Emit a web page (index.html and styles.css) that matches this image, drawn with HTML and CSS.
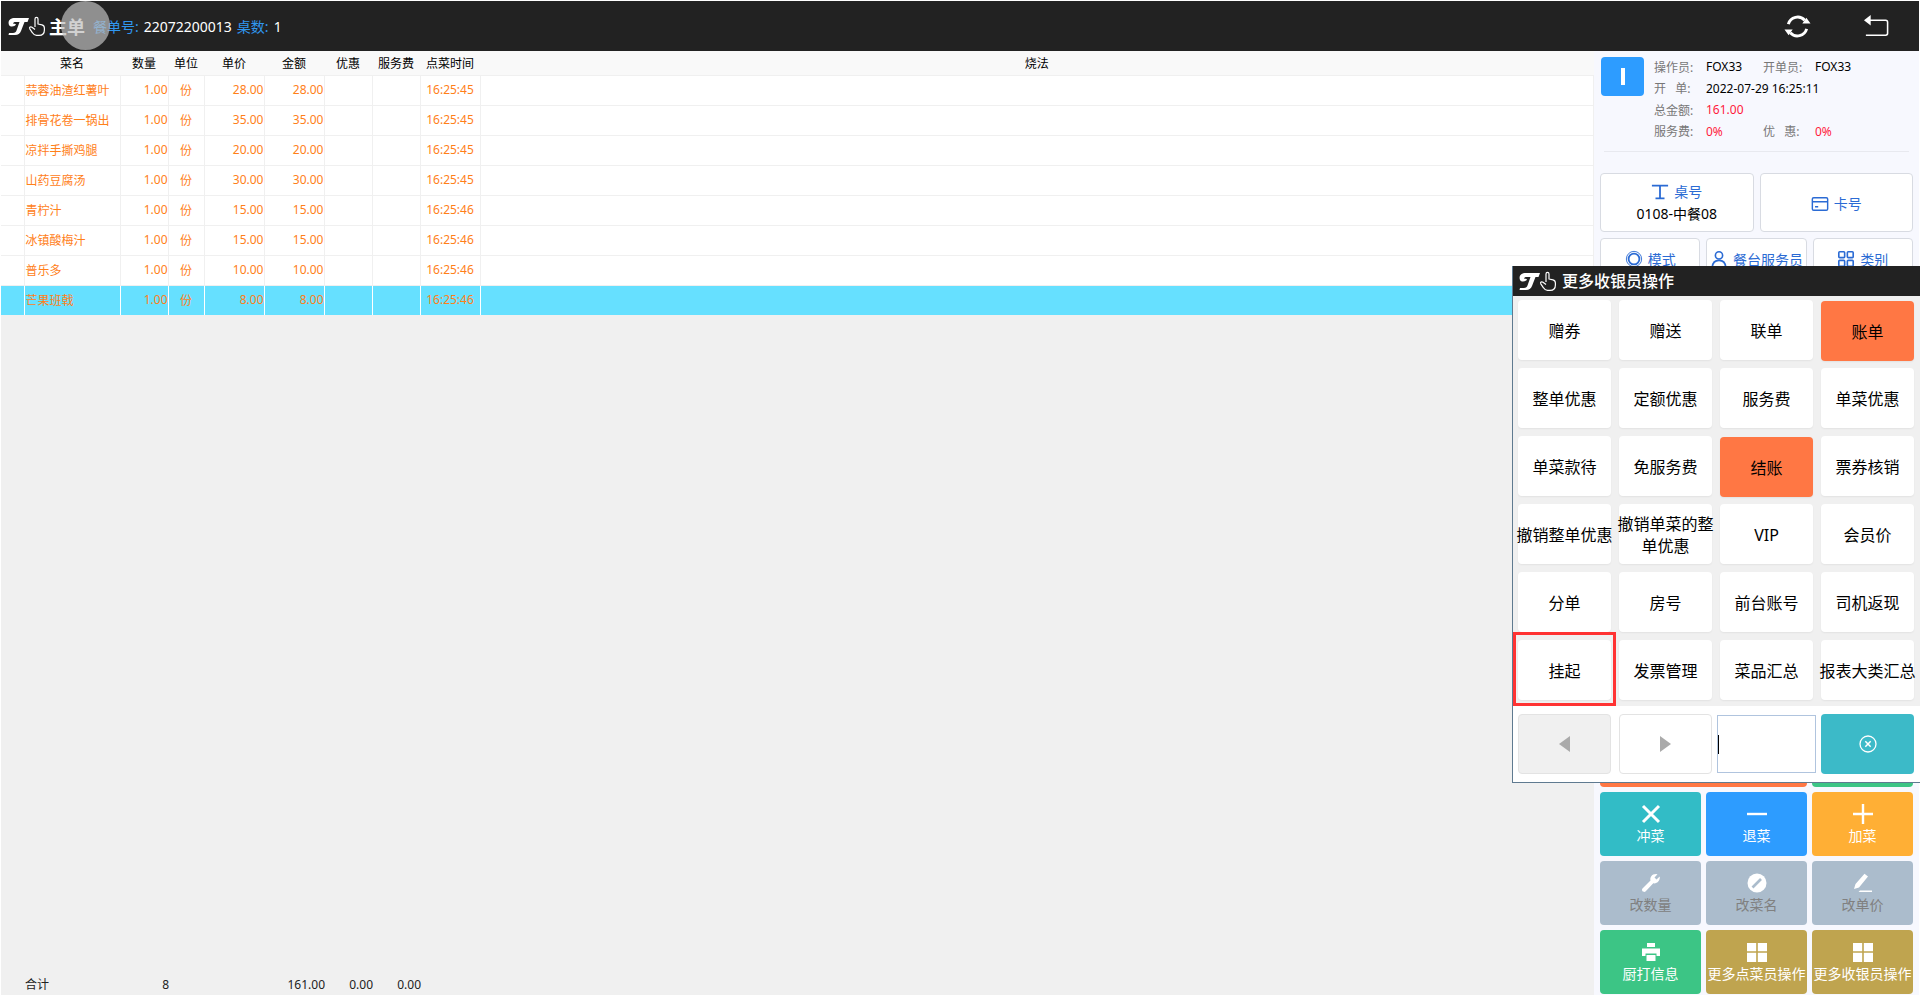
FILE: index.html
```html
<!DOCTYPE html>
<html lang="zh-CN">
<head>
    <meta charset="UTF-8">
    <title>主单</title>
    <link rel="stylesheet" href="styles.css">
</head>
<body>
    <svg class="defs" width="0" height="0">
        <symbol id="logo" viewBox="0 0 37 20">
            <path fill="#fff" d="M1 9C-.5 5 2 2 7 2H21L19.5 6H16.5L13 15C12 17.5 10 19 7 19H.5L1 17H5C7 17 8 16 8.5 14.5L11.5 6H7.5C5.5 6 5 7 5.5 8C6.5 7.5 7.5 7.6 8 8.5C7 10.5 2.5 11.5 1 9Z"/>
            <path fill="none" stroke="#fff" stroke-width="1.2" stroke-linejoin="round" d="M27 11V3C27 .8 30 .8 30 3V8L34 8.8C36 9.3 36.4 10 36.4 12V14C36.4 17.5 34.5 19.4 31 19.4H28.5C26.5 19.4 25.5 18.4 24.5 16.8L21.8 12.8C21 11.4 22.6 10.2 24 11.2L27 13.5"/>
        </symbol>
    </svg>

    <div class="app">
        <header class="topbar">
            <svg class="logo"><use href="#logo"/></svg>
            <span class="title">主单</span>
            <span class="meta-label">餐单号:</span>
            <span class="meta-value">22072200013</span>
            <span class="meta-label table-count">桌数:</span>
            <span class="meta-value">1</span>
            <span class="touch-dot"></span>
            <div class="top-actions">
                <svg class="top-icon" viewBox="0 0 28 28">
                    <path fill="none" stroke="#fff" stroke-width="3" d="M4.5 11.5A10 10 0 0 1 21.5 7.5M23.5 16.5A10 10 0 0 1 6.5 20.5"/>
                    <path fill="#fff" d="M19 11H27.5L23.2 5ZM.5 17H9L4.8 23Z"/>
                </svg>
                <svg class="top-icon" viewBox="0 0 28 28">
                    <path fill="none" stroke="#fff" stroke-width="1.6" d="M7 7.5H23.5C25 7.5 25.5 8.3 25.5 9.5V21C25.5 22.3 25 23 23.5 23H3"/>
                    <path fill="#fff" d="M1 7.5L8 2V13Z"/>
                </svg>
            </div>
        </header>

        <div class="content">
            <main class="orders">
                <table class="order-table">
                    <colgroup>
                        <col class="c-mark"><col class="c-name"><col class="c-qty"><col class="c-unit"><col class="c-price"><col class="c-amount"><col class="c-disc"><col class="c-fee"><col class="c-time"><col>
                    </colgroup>
                    <thead>
                        <tr><th></th><th>菜名</th><th>数量</th><th>单位</th><th>单价</th><th>金额</th><th>优惠</th><th>服务费</th><th>点菜时间</th><th>烧法</th></tr>
                    </thead>
                    <tbody>
                        <tr><td></td><td>蒜蓉油渣红薯叶</td><td class="num">1.00</td><td class="mid">份</td><td class="num">28.00</td><td class="num">28.00</td><td></td><td></td><td class="mid">16:25:45</td><td></td></tr>
                        <tr><td></td><td>排骨花卷一锅出</td><td class="num">1.00</td><td class="mid">份</td><td class="num">35.00</td><td class="num">35.00</td><td></td><td></td><td class="mid">16:25:45</td><td></td></tr>
                        <tr><td></td><td>凉拌手撕鸡腿</td><td class="num">1.00</td><td class="mid">份</td><td class="num">20.00</td><td class="num">20.00</td><td></td><td></td><td class="mid">16:25:45</td><td></td></tr>
                        <tr><td></td><td>山药豆腐汤</td><td class="num">1.00</td><td class="mid">份</td><td class="num">30.00</td><td class="num">30.00</td><td></td><td></td><td class="mid">16:25:45</td><td></td></tr>
                        <tr><td></td><td>青柠汁</td><td class="num">1.00</td><td class="mid">份</td><td class="num">15.00</td><td class="num">15.00</td><td></td><td></td><td class="mid">16:25:46</td><td></td></tr>
                        <tr><td></td><td>冰镇酸梅汁</td><td class="num">1.00</td><td class="mid">份</td><td class="num">15.00</td><td class="num">15.00</td><td></td><td></td><td class="mid">16:25:46</td><td></td></tr>
                        <tr><td></td><td>普乐多</td><td class="num">1.00</td><td class="mid">份</td><td class="num">10.00</td><td class="num">10.00</td><td></td><td></td><td class="mid">16:25:46</td><td></td></tr>
                        <tr class="selected"><td></td><td>芒果班戟</td><td class="num">1.00</td><td class="mid">份</td><td class="num">8.00</td><td class="num">8.00</td><td></td><td></td><td class="mid">16:25:46</td><td></td></tr>
                    </tbody>
                </table>
                <div class="totals">
                    <span class="t-label">合计</span>
                    <span class="t-qty">8</span>
                    <span class="t-amount">161.00</span>
                    <span class="t-disc">0.00</span>
                    <span class="t-fee">0.00</span>
                </div>
            </main>

            <aside class="side">
                <section class="info">
                    <div class="avatar"><span></span></div>
                    <div class="info-lines">
                        <div class="line"><span class="lbl">操作员:</span><span class="val">FOX33</span><span class="lbl">开单员:</span><span class="val">FOX33</span></div>
                        <div class="line"><span class="lbl">开&nbsp;&nbsp;&nbsp;单:</span><span class="val">2022-07-29 16:25:11</span></div>
                        <div class="line"><span class="lbl">总金额:</span><span class="val red">161.00</span></div>
                        <div class="line"><span class="lbl">服务费:</span><span class="val red">0%</span><span class="lbl">优&nbsp;&nbsp;&nbsp;惠:</span><span class="val red">0%</span></div>
                    </div>
                </section>

                <div class="card-row">
                    <div class="card">
                        <div class="card-title">
                            <svg class="card-icon" viewBox="0 0 20 20"><path fill="none" stroke="currentColor" stroke-width="2" d="M1 3H19M10 3V17M5 17H15"/></svg>桌号
                        </div>
                        <div class="card-value">0108-中餐08</div>
                    </div>
                    <div class="card">
                        <div class="card-title">
                            <svg class="card-icon" viewBox="0 0 20 20"><rect x="1.5" y="3" width="17" height="14" rx="1.5" fill="none" stroke="currentColor" stroke-width="1.6"/><path fill="none" stroke="currentColor" stroke-width="1.6" d="M2 7.5H18M4.5 13H8"/></svg>卡号
                        </div>
                    </div>
                </div>

                <div class="mode-row">
                    <div class="card small">
                        <svg class="card-icon" viewBox="0 0 20 20"><circle cx="10" cy="10" r="8.5" fill="none" stroke="currentColor" stroke-width="1"/><circle cx="10" cy="10" r="6" fill="none" stroke="currentColor" stroke-width="2"/></svg>模式
                    </div>
                    <div class="card small">
                        <svg class="card-icon" viewBox="0 0 20 20"><circle cx="10" cy="6" r="4" fill="none" stroke="currentColor" stroke-width="1.8"/><path fill="none" stroke="currentColor" stroke-width="1.8" d="M2.5 19C3 13.5 6 11.5 10 11.5S17 13.5 17.5 19"/></svg>餐台服务员
                    </div>
                    <div class="card small">
                        <svg class="card-icon" viewBox="0 0 20 20"><g fill="none" stroke="currentColor" stroke-width="1.8"><rect x="2" y="2" width="6.5" height="6.5" rx="1"/><rect x="11.5" y="2" width="6.5" height="6.5" rx="1"/><rect x="2" y="11.5" width="6.5" height="6.5" rx="1"/><rect x="11.5" y="11.5" width="6.5" height="6.5" rx="1"/></g></svg>类别
                    </div>
                </div>

                <div class="action-grid">
                    <div class="action orange wide"></div>
                    <div class="action green"></div>
                    <div class="action teal">
                        <svg class="action-icon" viewBox="0 0 20 20"><path stroke="#fff" stroke-width="3" d="M2 2L18 18M18 2L2 18"/></svg>冲菜
                    </div>
                    <div class="action blue">
                        <svg class="action-icon" viewBox="0 0 20 20"><path stroke="#fff" stroke-width="2.4" d="M0 10H20"/></svg>退菜
                    </div>
                    <div class="action amber">
                        <svg class="action-icon" viewBox="0 0 20 20"><path stroke="#fff" stroke-width="2.4" d="M0 10H20M10 0V20"/></svg>加菜
                    </div>
                    <div class="action muted">
                        <svg class="action-icon" viewBox="0 0 20 20"><path fill="#fff" d="M1.5 15.5L9.5 7.5C8.8 4.5 10.5 1 15 1L16.5 1.3L13.5 4.5L15.5 6.5L18.7 3.5C19.5 7.5 16 11 12.3 10.3L4.5 18.5C2.5 20 0 17.5 1.5 15.5Z"/></svg>改数量
                    </div>
                    <div class="action muted">
                        <svg class="action-icon" viewBox="0 0 20 20"><circle cx="10" cy="10" r="9.5" fill="#fff"/><path stroke="#abbccc" stroke-width="2.6" d="M5.5 14.5L14 6"/></svg>改菜名
                    </div>
                    <div class="action muted">
                        <svg class="action-icon" viewBox="0 0 20 20"><path fill="#fff" d="M1 16L2.5 11L11.5 .8L15 3.5L6 14.5ZM7 17.5H19V19H5.5Z"/></svg>改单价
                    </div>
                    <div class="action green">
                        <svg class="action-icon" viewBox="0 0 20 20"><path fill="#fff" d="M6 1H14V5H6ZM1 6.5H19V14H15.5V11.5H4.5V14H1ZM5.5 13H14.5V19H5.5Z"/></svg>厨打信息
                    </div>
                    <div class="action gold">
                        <svg class="action-icon" viewBox="0 0 20 20"><path fill="#fff" d="M0 1H9.2V9.2H0ZM10.8 1H20V9.2H10.8ZM0 10.8H9.2V20H0ZM10.8 10.8H20V20H10.8Z"/></svg>更多点菜员操作
                    </div>
                    <div class="action gold">
                        <svg class="action-icon" viewBox="0 0 20 20"><path fill="#fff" d="M0 1H9.2V9.2H0ZM10.8 1H20V9.2H10.8ZM0 10.8H9.2V20H0ZM10.8 10.8H20V20H10.8Z"/></svg>更多收银员操作
                    </div>
                </div>
            </aside>
        </div>
    </div>

    <!-- 更多收银员操作 popup -->
    <div class="popup">
        <div class="popup-head">
            <svg class="popup-logo"><use href="#logo"/></svg>
            <span>更多收银员操作</span>
        </div>
        <div class="popup-grid">
            <div class="pop-btn"><span>赠券</span></div>
            <div class="pop-btn"><span>赠送</span></div>
            <div class="pop-btn"><span>联单</span></div>
            <div class="pop-btn hot"><span>账单</span></div>
            <div class="pop-btn"><span>整单优惠</span></div>
            <div class="pop-btn"><span>定额优惠</span></div>
            <div class="pop-btn"><span>服务费</span></div>
            <div class="pop-btn"><span>单菜优惠</span></div>
            <div class="pop-btn"><span>单菜款待</span></div>
            <div class="pop-btn"><span>免服务费</span></div>
            <div class="pop-btn hot"><span>结账</span></div>
            <div class="pop-btn"><span>票券核销</span></div>
            <div class="pop-btn"><span>撤销整单优惠</span></div>
            <div class="pop-btn"><span>撤销单菜的整单优惠</span></div>
            <div class="pop-btn"><span>VIP</span></div>
            <div class="pop-btn"><span>会员价</span></div>
            <div class="pop-btn"><span>分单</span></div>
            <div class="pop-btn"><span>房号</span></div>
            <div class="pop-btn"><span>前台账号</span></div>
            <div class="pop-btn"><span>司机返现</span></div>
            <div class="pop-btn marked"><span>挂起</span></div>
            <div class="pop-btn"><span>发票管理</span></div>
            <div class="pop-btn"><span>菜品汇总</span></div>
            <div class="pop-btn"><span>报表大类汇总</span></div>
        </div>
        <div class="popup-foot">
            <div class="pager off"><i class="arrow-left"></i></div>
            <div class="pager"><i class="arrow-right"></i></div>
            <div class="search-box"><i class="caret"></i></div>
            <div class="clear-btn">
                <svg width="18" height="18" viewBox="0 0 18 18"><circle cx="9" cy="9" r="8" fill="none" stroke="#fff" stroke-width="1.3"/><path stroke="#fff" stroke-width="1.5" d="M6.3 6.3L11.7 11.7M11.7 6.3L6.3 11.7"/></svg>
            </div>
        </div>
    </div>
</body>
</html>
```

FILE: styles.css
```css
* {
    box-sizing: border-box;
}

html, body {
    height: 100%;
}

body {
    margin: 0;
    padding: 1px;
    background-color: #fff;
    color: #000;
    font-family: "Noto Sans", "Noto Sans CJK SC", sans-serif;
    font-size: 12px;
    overflow: hidden;
}

.defs {
    position: absolute;
}

.app {
    display: flex;
    flex-direction: column;
    height: 100%;
    background-color: #f0f0f0;
}

/* top bar */
.topbar {
    position: relative;
    display: flex;
    align-items: center;
    flex: none;
    height: 50px;
    padding-left: 7px;
    background-color: #222;
    color: #fff;
    font-size: 14px;
}

.logo {
    width: 37px;
    height: 20px;
    margin-right: 4px;
}

.title {
    width: 44px;
    font-size: 18px;
    font-weight: 700;
}

.meta-label {
    margin-right: 5px;
    color: #3097f0;
}

.meta-value {
    font-size: 14px;
}

.table-count {
    margin-left: 5px;
}

.touch-dot {
    position: absolute;
    left: 60px;
    top: 0;
    width: 49px;
    height: 49px;
    border-radius: 50%;
    background-color: rgba(190, 190, 190, 0.7);
}

.top-actions {
    display: flex;
    align-items: center;
    gap: 52px;
    margin-left: auto;
    margin-right: 29px;
}

.top-icon {
    width: 27px;
    height: 27px;
}

.content {
    display: flex;
    flex: 1;
    min-height: 0;
}

/* order table */
.orders {
    display: flex;
    flex-direction: column;
    flex: 1;
    min-width: 0;
}

.order-table {
    width: 100%;
    table-layout: fixed;
    border-collapse: collapse;
    background-color: #fff;
}

.c-mark { width: 23px; }
.c-name { width: 96px; }
.c-qty { width: 48px; }
.c-unit { width: 36px; }
.c-price { width: 60px; }
.c-amount { width: 60px; }
.c-disc { width: 48px; }
.c-fee { width: 48px; }
.c-time { width: 60px; }

.order-table th {
    height: 24px;
    padding: 3px 0 0;
    background-color: #f9f9f9;
    border-bottom: 1px solid #f0f0f0;
    font-weight: 400;
    text-align: center;
    line-height: 1;
}

.order-table td {
    height: 30px;
    padding: 0 1px 1px;
    border: 1px solid #f0f0f0;
    border-top: 0;
    color: #ff8019;
    white-space: nowrap;
    overflow: hidden;
}

.order-table td:first-child {
    border-left: 0;
}

.order-table .num {
    padding-right: 0;
    text-align: right;
}

.order-table .mid {
    text-align: center;
}

.order-table .selected td {
    background-color: #66e0ff;
    border-color: #fff;
    border-bottom: 0;
}

.totals {
    display: flex;
    align-items: center;
    height: 22px;
    margin-top: auto;
    color: #222;
}

.totals span {
    flex: none;
    text-align: right;
}

.totals .t-label {
    width: 49px;
    text-align: left;
    margin-left: 24px;
    margin-right: -1px;
}

.t-qty { width: 96px; }
.t-amount { width: 156px; }
.t-disc { width: 48px; }
.t-fee { width: 48px; }

/* right panel */
.side {
    display: flex;
    flex-direction: column;
    flex: none;
    width: 325px;
    padding: 6px 6px 1px 6px;
    background-color: #f7f8fe;
}

.info {
    display: flex;
    height: 95px;
    margin: 0 4px 21px;
    border-bottom: 1px solid #e8e9ef;
}

.avatar {
    display: flex;
    align-items: center;
    justify-content: center;
    flex: none;
    width: 43px;
    height: 39px;
    margin-left: -3px;
    margin-right: 10px;
    border-radius: 4px;
    background-color: #2d9cff;
}

.avatar span {
    display: block;
    width: 4px;
    height: 17px;
    background-color: #fff;
}

.info-lines {
    flex: 1;
    margin-top: -1px;
}

.line {
    display: flex;
    height: 21.5px;
    align-items: center;
}

.lbl {
    width: 52px;
    color: #777;
}

.val {
    width: 57px;
    white-space: nowrap;
}

.red {
    color: #ff1a3c;
}

.card-row {
    display: flex;
    gap: 6px;
    height: 59px;
    margin-bottom: 6px;
}

.card {
    display: flex;
    flex-direction: column;
    align-items: center;
    justify-content: center;
    flex: 1;
    min-width: 0;
    padding-top: 2px;
    background-color: #fff;
    border: 1px solid #d8dbe2;
    border-radius: 4px;
    color: #2b6bd4;
    font-size: 14px;
    white-space: nowrap;
}

.card-title {
    display: flex;
    align-items: center;
    line-height: 20px;
}

.card-value {
    margin-top: 1px;
    color: #000;
    font-size: 14px;
    line-height: 22px;
}

.card-icon {
    flex: none;
    width: 18px;
    height: 18px;
    margin-right: 5px;
}

.mode-row {
    display: flex;
    gap: 6px;
    height: 41px;
}

.card.small {
    flex-direction: row;
    padding-top: 0;
}

.action-grid {
    display: grid;
    grid-template-columns: repeat(3, 101px);
    grid-auto-rows: 64px;
    gap: 5px;
    margin-top: auto;
}

.action {
    display: flex;
    flex-direction: column;
    align-items: center;
    justify-content: center;
    border-radius: 4px;
    color: #fff;
    font-size: 14px;
    line-height: 18px;
    white-space: nowrap;
}

.wide {
    grid-column: span 2;
}

.action-icon {
    width: 20px;
    height: 20px;
    margin-bottom: 3px;
}

.orange { background-color: #ff7744; }
.green { background-color: #3cc585; }
.teal { background-color: #32bcc6; }
.blue { background-color: #2d9cff; }
.amber { background-color: #ffaf35; }
.gold { background-color: #bfa44f; }
.muted { background-color: #abbccc; color: #808080; }

/* popup */
.popup {
    position: absolute;
    left: 1512px;
    top: 266px;
    width: 408px;
    height: 517px;
    background-color: #fff;
    border: 1px solid #5f7a90;
    border-top: 0;
    border-right: 0;
}

.popup-head {
    display: flex;
    align-items: center;
    height: 30px;
    padding-left: 6px;
    background-color: #222;
    color: #fff;
    font-size: 16px;
    font-weight: 500;
}

.popup-head span {
    margin-top: -2px;
}

.popup-logo {
    width: 37px;
    height: 20px;
    margin-right: 6px;
}

.popup-grid {
    display: grid;
    grid-template-columns: repeat(4, 93px);
    grid-auto-rows: 60px;
    gap: 8px;
    height: 410px;
    padding: 4px 0 0 5px;
    background-color: #f0f0f0;
}

.pop-btn {
    position: relative;
    display: flex;
    align-items: center;
    background-color: #fff;
    border-radius: 4px;
    box-shadow: 0 1px 2px rgba(0, 0, 0, 0.06);
    font-size: 16px;
    line-height: 22px;
}

.pop-btn span {
    flex: 1;
    margin: 0 -4px;
    padding-top: 2px;
    text-align: center;
}

.pop-btn.hot {
    margin-top: 1px;
    margin-bottom: -1px;
    background-color: #ff7744;
}

.pop-btn.marked {
    z-index: 1;
}

.pop-btn.marked::after {
    content: "";
    position: absolute;
    left: -5px;
    top: -8px;
    box-sizing: border-box;
    width: 103px;
    height: 74px;
    border: 3px solid #ff3333;
}

.popup-foot {
    display: grid;
    grid-template-columns: repeat(4, 93px);
    gap: 8px;
    height: 60px;
    margin-top: 8px;
    padding-left: 5px;
}

.popup-foot .search-box {
    margin: 1px -3px;
}

.pager {
    display: flex;
    align-items: center;
    justify-content: center;
    background-color: #fff;
    border: 1px solid #e3e3e3;
    border-radius: 4px;
}

.pager.off {
    background-color: #f0f0f0;
}

.arrow-left,
.arrow-right {
    display: block;
    width: 0;
    height: 0;
    border-top: 8px solid transparent;
    border-bottom: 8px solid transparent;
}

.arrow-left {
    border-right: 11px solid #aaa;
}

.arrow-right {
    border-left: 11px solid #aaa;
}

.search-box {
    display: flex;
    align-items: center;
    background-color: #fff;
    border: 1px solid #b0c4de;
}

.caret {
    display: block;
    width: 1px;
    height: 19px;
    background-color: #000;
}

.clear-btn {
    display: flex;
    align-items: center;
    justify-content: center;
    background-color: #3cbac8;
    border-radius: 4px;
}
```
